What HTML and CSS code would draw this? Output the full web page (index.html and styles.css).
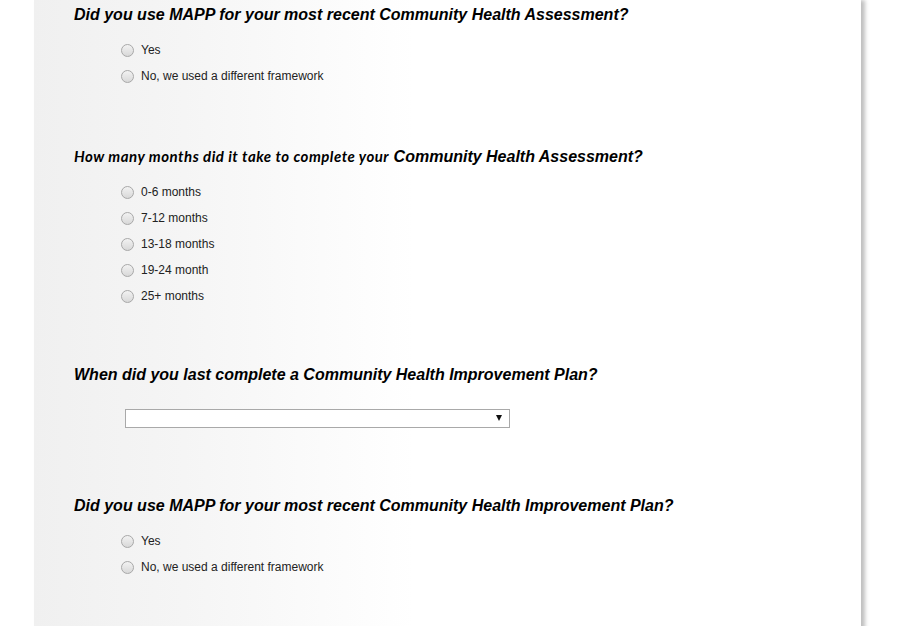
FILE: index.html
```html
<!DOCTYPE html>
<html lang="en">
<head>
    <meta charset="UTF-8">
    <title>Community Health Survey</title>
    <link rel="stylesheet" href="styles.css">
</head>
<body>
    <div class="page">
        <div class="question">
            <h3 class="q-title">Did you use MAPP for your most recent Community Health Assessment?</h3>
            <div class="options">
                <label class="option"><input type="radio" name="mapp-cha"> Yes</label>
                <label class="option"><input type="radio" name="mapp-cha"> No, we used a different framework</label>
            </div>
        </div>

        <div class="question question-months">
            <h3 class="q-title"><span class="alt-font">How many months did it take to complete your</span> Community Health Assessment?</h3>
            <div class="options">
                <label class="option"><input type="radio" name="cha-months"> 0-6 months</label>
                <label class="option"><input type="radio" name="cha-months"> 7-12 months</label>
                <label class="option"><input type="radio" name="cha-months"> 13-18 months</label>
                <label class="option"><input type="radio" name="cha-months"> 19-24 month</label>
                <label class="option"><input type="radio" name="cha-months"> 25+ months</label>
            </div>
        </div>

        <div class="question question-select">
            <h3 class="q-title">When did you last complete a Community Health Improvement Plan?</h3>
            <div class="select-wrap">
                <select class="year-select">
                    <option value=""></option>
                </select>
            </div>
        </div>

        <div class="question">
            <h3 class="q-title">Did you use MAPP for your most recent Community Health Improvement Plan?</h3>
            <div class="options">
                <label class="option"><input type="radio" name="mapp-chip"> Yes</label>
                <label class="option"><input type="radio" name="mapp-chip"> No, we used a different framework</label>
            </div>
        </div>
    </div>
</body>
</html>
```

FILE: styles.css
```css
body {
    margin: 0;
    background-color: #fff;
    font-family: "Liberation Sans", Arial, sans-serif;
    overflow: hidden;
}

.page {
    width: 827px;
    min-height: 700px;
    margin-left: 34px;
    padding-top: 5px;
    background: linear-gradient(to right, #f0f0f0 0, #f5f5f5 150px, #fff 380px);
    box-shadow: 4px 0 4px rgba(0, 0, 0, 0.25);
}

.question {
    padding-left: 40px;
    margin-bottom: 58px;
}

.question-months {
    margin-bottom: 56px;
}

.q-title {
    margin: 0 0 12px;
    font-size: 16px;
    line-height: 20px;
    font-style: italic;
    font-weight: bold;
    color: #000;
}

.alt-font {
    font-family: Lato, "Liberation Sans", sans-serif;
    font-size: 15px;
    line-height: 14px;
    letter-spacing: 0.5px;
}

.options {
    padding-left: 47px;
}

.option {
    display: flex;
    align-items: center;
    height: 26px;
    font-size: 12px;
    color: #222;
}

.option input {
    appearance: none;
    width: 13px;
    height: 13px;
    margin: 0 7px 0 0;
    border: 1px solid #a8a8a8;
    border-radius: 50%;
    background: linear-gradient(#f2f2f2, #d8d8d8);
}

.question-select {
    margin-bottom: 0;
}

.question-select .q-title {
    margin-bottom: 24px;
}

.select-wrap {
    position: relative;
    width: 385px;
    margin-left: 51px;
    margin-bottom: 68px;
}

.year-select {
    appearance: none;
    display: block;
    width: 385px;
    height: 19px;
    margin: 0;
    border: 1px solid #a9a9a9;
    border-radius: 0;
    background: #fff;
}

/* dropdown arrow */
.select-wrap::after {
    content: "";
    position: absolute;
    right: 8px;
    top: 6px;
    border-left: 3.5px solid transparent;
    border-right: 3.5px solid transparent;
    border-top: 6px solid #111;
}
```
